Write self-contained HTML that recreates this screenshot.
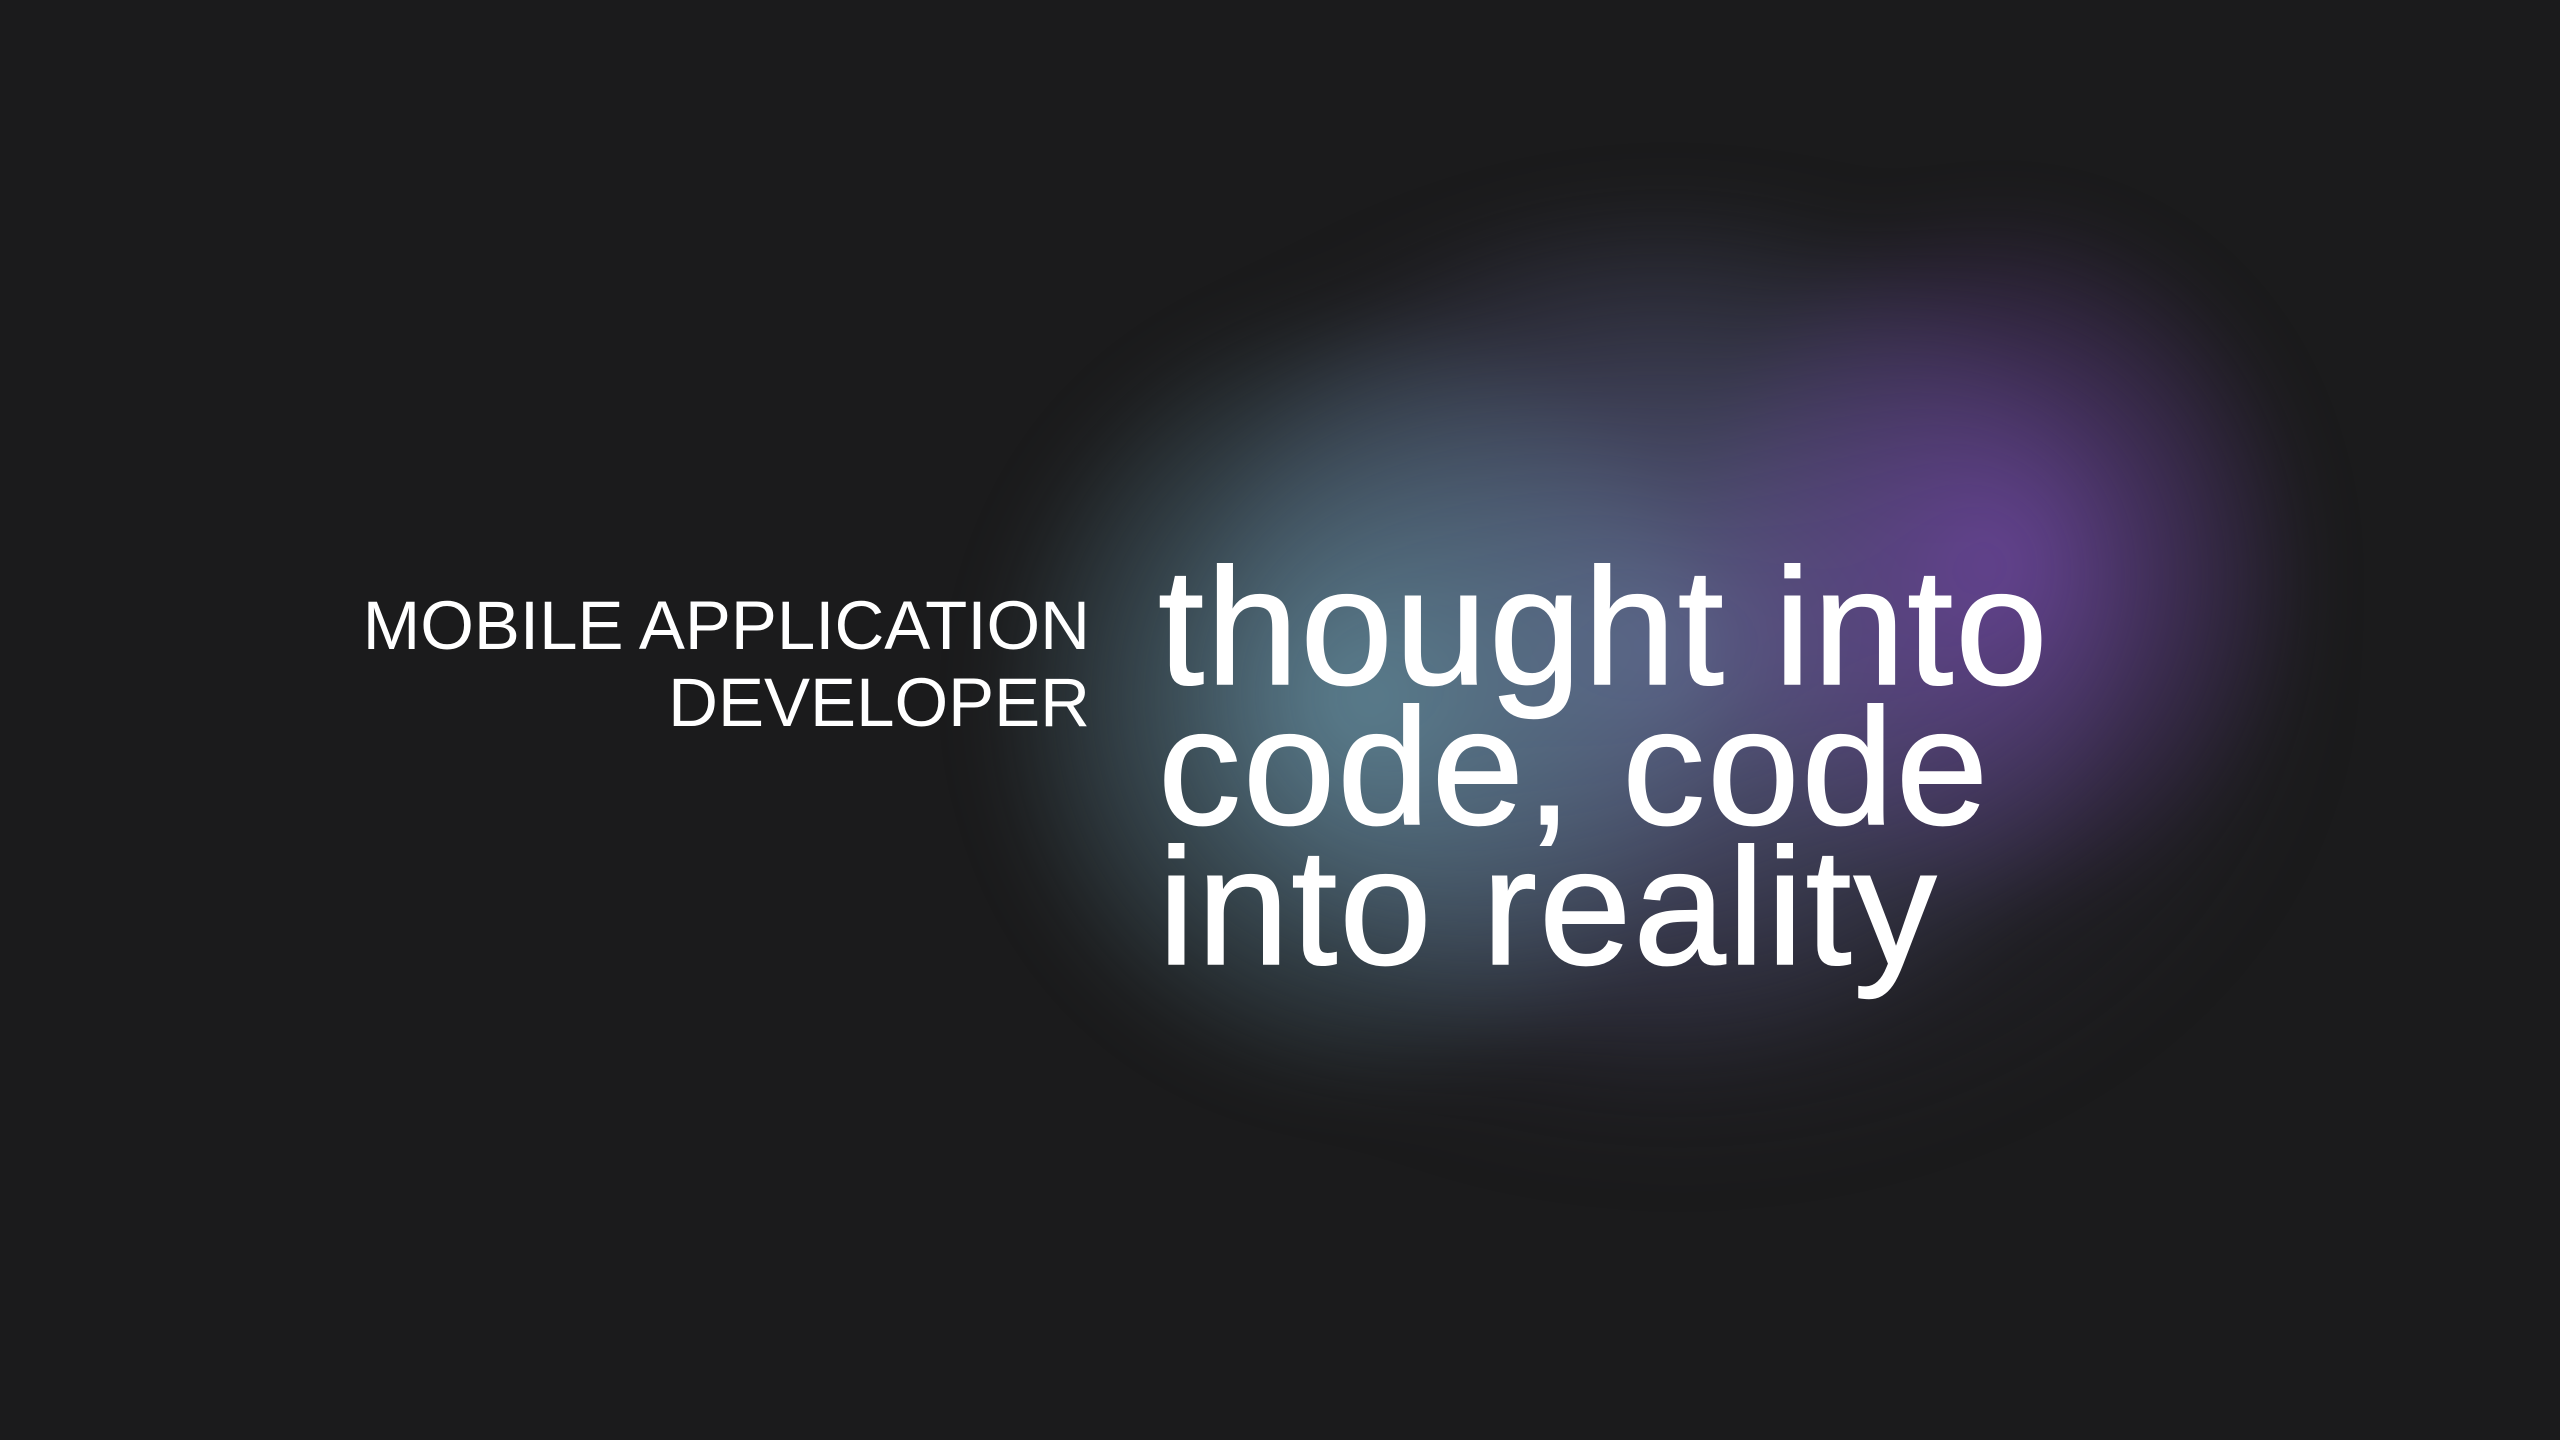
<!DOCTYPE html>
<html><head><meta charset="utf-8"><style>
html,body{margin:0;padding:0}
body{width:2560px;height:1440px;background:#1b1b1c;position:relative;overflow:hidden;font-family:"Liberation Sans",sans-serif;color:#fff}
.blob{position:absolute;left:0;top:0;width:2560px;height:1440px;
background:
radial-gradient(ellipse 320px 360px at 2000px 560px, rgba(110,70,160,0.85), rgba(110,70,160,0) 100%),
radial-gradient(ellipse 380px 400px at 1360px 700px, rgba(95,135,150,0.9), rgba(95,135,150,0) 100%),
radial-gradient(ellipse 480px 450px at 1660px 640px, rgba(100,105,150,0.85), rgba(80,80,120,0) 100%),
radial-gradient(ellipse 650px 500px at 1680px 680px, rgba(55,50,75,0.55), rgba(40,40,50,0) 100%);
filter:blur(30px)}
.left{position:absolute;right:1470px;top:587px;text-align:right;font-size:69px;line-height:77px}
.big{position:absolute;left:1158px;top:558px;font-size:166px;line-height:140px;letter-spacing:2px;-webkit-text-stroke:1.5px #fff}
</style></head><body>
<div class="blob"></div>
<div class="left">MOBILE APPLICATION<br>DEVELOPER</div>
<div class="big">thought into<br>code, code<br>into reality</div>
</body></html>
